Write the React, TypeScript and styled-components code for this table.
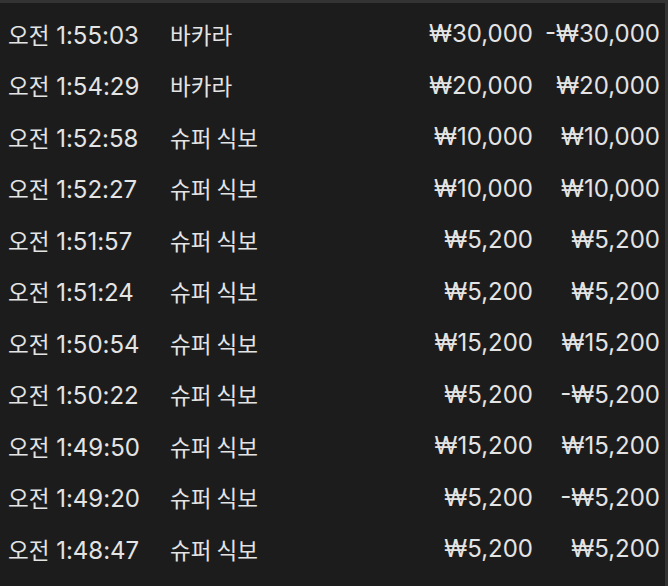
import styled, { createGlobalStyle } from 'styled-components'

const GlobalStyle = createGlobalStyle`
  html, body {
    margin: 0;
    padding: 0;
    background: #1c1c1c;
  }
`

type Bet = { period: string; clock: string; game: string; amount: string; result: string }

const bets: Bet[] = [
  { period: '오전', clock: '1:55:03', game: '바카라', amount: '₩30,000', result: '-₩30,000' },
  { period: '오전', clock: '1:54:29', game: '바카라', amount: '₩20,000', result: '₩20,000' },
  { period: '오전', clock: '1:52:58', game: '슈퍼 식보', amount: '₩10,000', result: '₩10,000' },
  { period: '오전', clock: '1:52:27', game: '슈퍼 식보', amount: '₩10,000', result: '₩10,000' },
  { period: '오전', clock: '1:51:57', game: '슈퍼 식보', amount: '₩5,200', result: '₩5,200' },
  { period: '오전', clock: '1:51:24', game: '슈퍼 식보', amount: '₩5,200', result: '₩5,200' },
  { period: '오전', clock: '1:50:54', game: '슈퍼 식보', amount: '₩15,200', result: '₩15,200' },
  { period: '오전', clock: '1:50:22', game: '슈퍼 식보', amount: '₩5,200', result: '-₩5,200' },
  { period: '오전', clock: '1:49:50', game: '슈퍼 식보', amount: '₩15,200', result: '₩15,200' },
  { period: '오전', clock: '1:49:20', game: '슈퍼 식보', amount: '₩5,200', result: '-₩5,200' },
  { period: '오전', clock: '1:48:47', game: '슈퍼 식보', amount: '₩5,200', result: '₩5,200' },
]

export default function App() {
  return (
    <>
      <GlobalStyle />
      <Panel>
        {bets.map((b) => (
          <Row key={b.clock}>
            <Cell>
              <Hangul>{b.period}</Hangul> {b.clock}
            </Cell>
            <Cell>
              <Hangul>{b.game}</Hangul>
            </Cell>
            <Cell $right>{b.amount}</Cell>
            <Cell $right>{b.result}</Cell>
          </Row>
        ))}
      </Panel>
    </>
  )
}

const Panel = styled.div`
  width: 668px;
  height: 586px;
  box-sizing: border-box;
  background: #1c1c1c;
  border-top: 3px solid #333;
  border-right: 3px solid #333;
  padding: 5px 5px 0 8px;
  overflow: hidden;
`

const Row = styled.div`
  display: grid;
  grid-template-columns: 162px 1fr auto 127px;
  align-items: center;
  height: 51.5px;
  font-family: Inter, "Noto Sans CJK KR", sans-serif;
  font-size: 24px;
  color: #e4e4e4;
`

const Cell = styled.div<{ $right?: boolean }>`
  text-align: ${(p) => (p.$right ? 'right' : 'left')};
  white-space: nowrap;
`

const Hangul = styled.span`
  font-family: "Noto Sans CJK KR", sans-serif;
  font-size: 22.5px;
`
